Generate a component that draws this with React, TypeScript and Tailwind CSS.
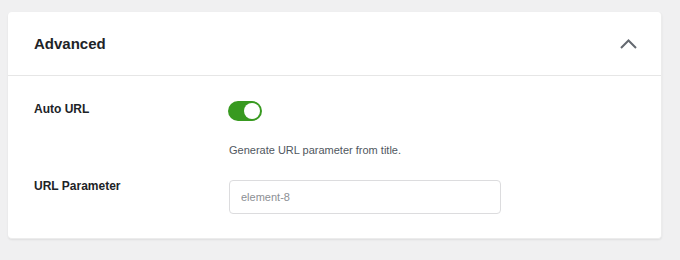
import React from "react";

const Toggle: React.FC<{ on: boolean }> = ({ on }) => (
  <button
    type="button"
    aria-pressed={on}
    className={`relative w-[34px] h-[20px] rounded-full ${on ? "bg-[#389a20]" : "bg-[#c3c4c7]"}`}
  >
    <span
      className={`absolute top-[2px] w-[16px] h-[16px] rounded-full bg-white ${on ? "right-[2px]" : "left-[2px]"}`}
    />
  </button>
);

const App: React.FC = () => {
  return (
    <div
      className="w-[680px] h-[260px] bg-[#f0f0f1] pt-[12px] pl-[8px]"
      style={{ fontFamily: '"Liberation Sans", Arial, sans-serif' }}
    >
      <div className="w-[654px] h-[227px] bg-white rounded-[4px] shadow-[0_1px_2px_rgba(0,0,0,0.08)] border border-[#ececec] border-t-0 border-l-0">
        <div className="h-[64px] flex items-center justify-between pl-[26px] pr-[24px] border-b border-[#e6e6e6]">
          <h2 className="text-[15px] font-bold text-[#1d2327] leading-none">Advanced</h2>
          <svg width="17" height="10" viewBox="0 0 17 10" fill="none" className="mt-[1px]">
            <polyline
              points="1,9 8.5,1.5 16,9"
              stroke="#646970"
              strokeWidth="2"
              strokeLinejoin="miter"
            />
          </svg>
        </div>
        <div className="pt-[25px] px-[26px]">
          <div className="flex items-start">
            <div className="w-[194px] text-[12px] leading-[16px] font-bold text-[#1d2327]">Auto URL</div>
            <div className="flex flex-col">
              <Toggle on={true} />
              <p className="mt-[21px] pl-[1px] text-[11px] leading-[16px] text-[#50575e]">
                Generate URL parameter from title.
              </p>
            </div>
          </div>
          <div className="flex items-start mt-[20px]">
            <div className="w-[195px] text-[12px] leading-[16px] font-bold text-[#1d2327]">URL Parameter</div>
            <input
              type="text"
              placeholder="element-8"
              className="mt-[2px] w-[272px] h-[34px] px-[11px] rounded-[4px] border border-[#dcdcde] text-[11px] text-[#1d2327] placeholder:text-[#8c8f94] outline-none"
            />
          </div>
        </div>
      </div>
    </div>
  );
};

export default App;
